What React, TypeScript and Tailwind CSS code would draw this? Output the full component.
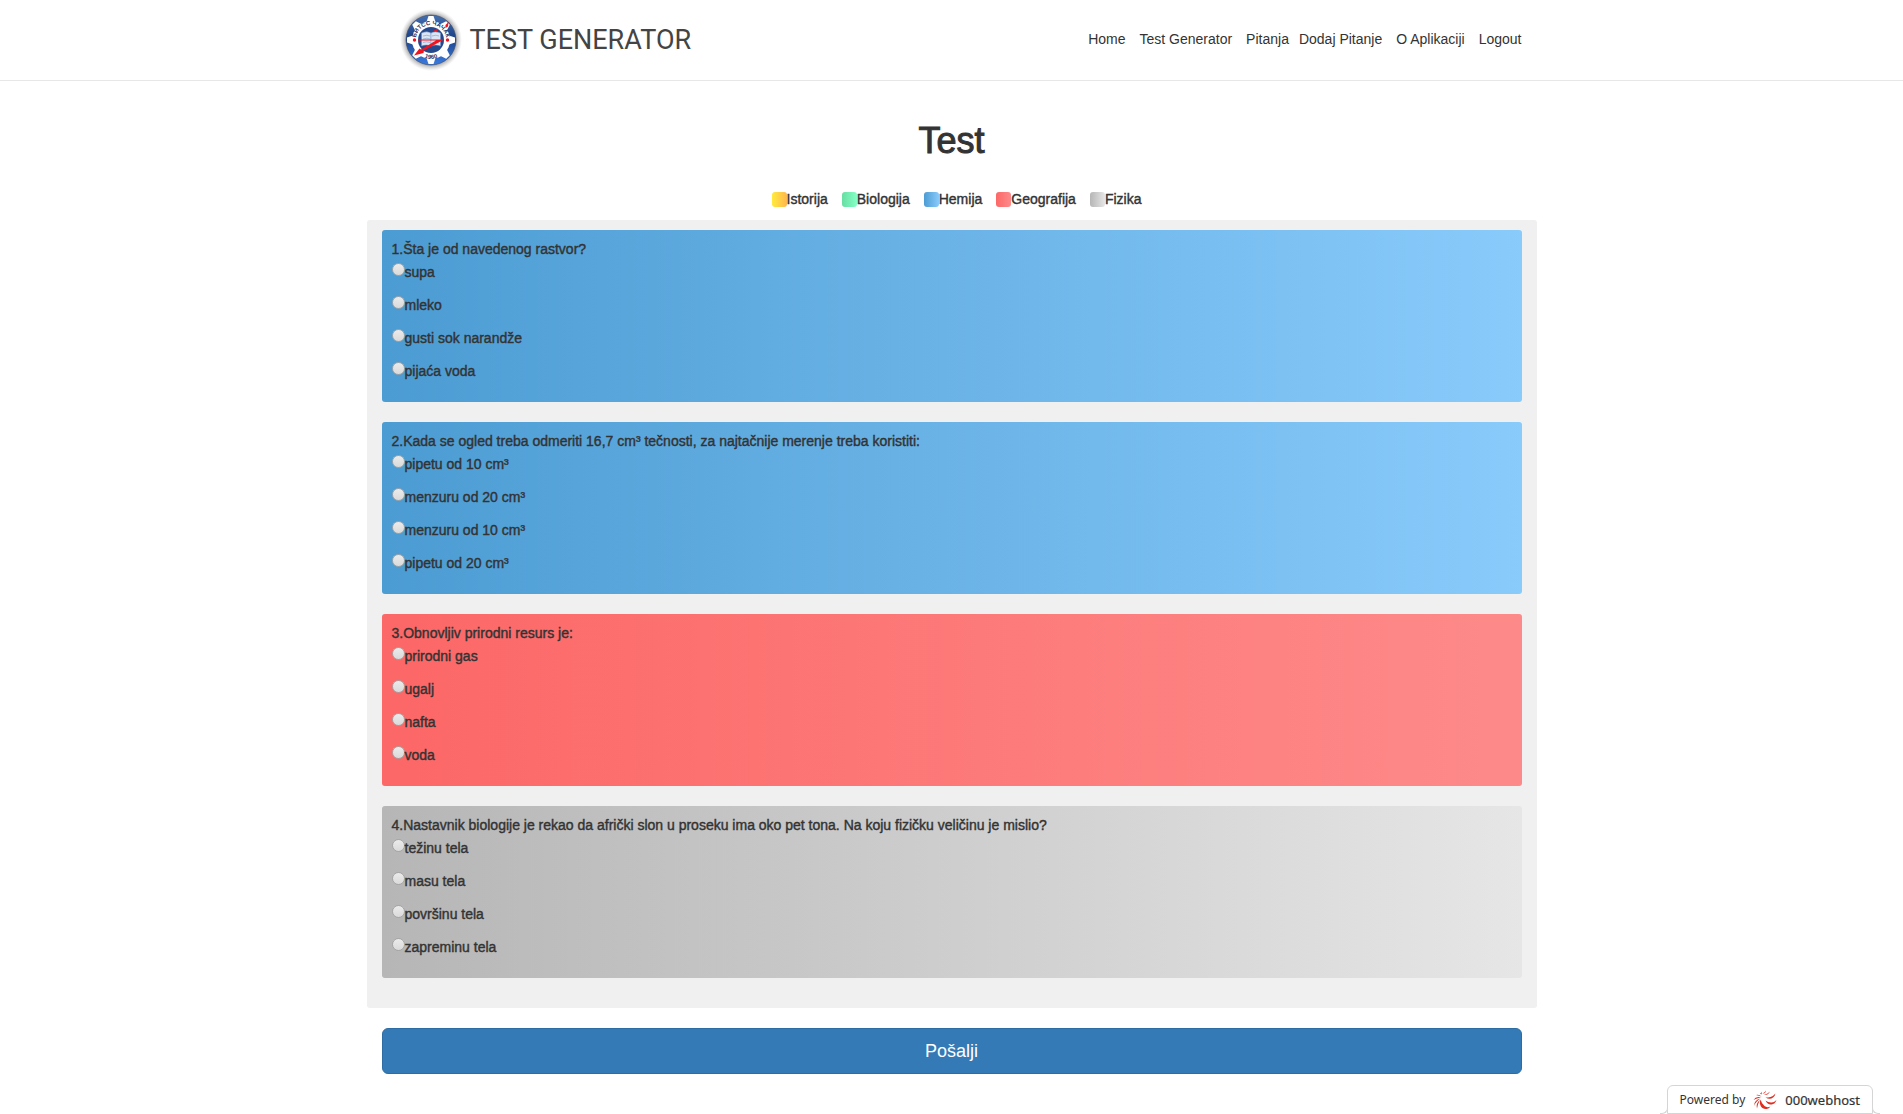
const FONT = "font-['Liberation_Sans',Arial,sans-serif]";
const FAUX = '[-webkit-text-stroke:0.4px_#333]';

const SUBJECTS = {
  istorija: 'bg-linear-to-r from-[#ffeb3b] to-[#ffb74d]',
  biologija: 'bg-linear-to-r from-[#66dea4] to-[#85ffc4]',
  hemija: 'bg-linear-to-r from-[#4b9cd3] to-[#89cbfb]',
  geografija: 'bg-linear-to-r from-[#fc6767] to-[#fd8a8a]',
  fizika: 'bg-linear-to-r from-[#b6b6b6] to-[#e6e6e6]',
};

const LEGEND: { label: string; subject: keyof typeof SUBJECTS }[] = [
  { label: 'Istorija', subject: 'istorija' },
  { label: 'Biologija', subject: 'biologija' },
  { label: 'Hemija', subject: 'hemija' },
  { label: 'Geografija', subject: 'geografija' },
  { label: 'Fizika', subject: 'fizika' },
];

const QUESTIONS: { text: string; subject: keyof typeof SUBJECTS; options: string[] }[] = [
  { text: 'Šta je od navedenog rastvor?', subject: 'hemija', options: ['supa', 'mleko', 'gusti sok narandže', 'pijaća voda'] },
  {
    text: 'Kada se ogled treba odmeriti 16,7 cm³ tečnosti, za najtačnije merenje treba koristiti:',
    subject: 'hemija',
    options: ['pipetu od 10 cm³', 'menzuru od 20 cm³', 'menzuru od 10 cm³', 'pipetu od 20 cm³'],
  },
  { text: 'Obnovljiv prirodni resurs je:', subject: 'geografija', options: ['prirodni gas', 'ugalj', 'nafta', 'voda'] },
  {
    text: 'Nastavnik biologije je rekao da afrički slon u proseku ima oko pet tona. Na koju fizičku veličinu je mislio?',
    subject: 'fizika',
    options: ['težinu tela', 'masu tela', 'površinu tela', 'zapreminu tela'],
  },
];

const NAV_GROUPS = [
  ['Home', 'Test Generator', 'Pitanja'],
  ['Dodaj Pitanje', 'O Aplikaciji', 'Logout'],
];
const TEETH = [0, 45, 90, 135, 180, 225, 270, 315];

function SchoolLogo() {
  return (
    <svg viewBox="-1 0 64 64" className="size-16 shrink-0" aria-hidden="true">
      <defs>
        <radialGradient id="halo">
          <stop offset="0.78" stopColor="#9c9c9c" />
          <stop offset="1" stopColor="#c8c8c8" stopOpacity="0" />
        </radialGradient>
        <linearGradient id="disc" x1="0" y1="0" x2="0" y2="1">
          <stop offset="0" stopColor="#4470b0" />
          <stop offset="0.45" stopColor="#1c4288" />
          <stop offset="1" stopColor="#3a7ce0" />
        </linearGradient>
        <path id="arcTop" d="M17.500 37A15.300 15.300 0 1 1 46.500 37" />
        <path id="arcBottom" d="M20 46.500A18.500 18.500 0 0 0 44 46.500" />
      </defs>
      <circle cx="32" cy="32" r="31" fill="url(#halo)" />
      <circle cx="32" cy="32" r="25" fill="url(#disc)" stroke="#3a4a68" strokeWidth="0.6" />
      <g fill="#fff">
        {TEETH.map((a) => (
          <path key={a} d="M27.500 14L29.500 8H34.500L36.500 14Z" transform={`rotate(${a} 32 32)`} />
        ))}
        <circle cx="32" cy="32" r="19" />
      </g>
      <circle cx="32" cy="32" r="13" fill="#24498c" />
      <g fill="#dbe5f3" stroke="#6c8cc0" strokeWidth="0.5">
        <path d="M22.500 25Q28 22.500 32 25V38Q27 36 22.500 38Z" />
        <path d="M41.500 25Q36 22.500 32 25V38Q37 36 41.500 38Z" />
        <path d="M24 28Q28 26.500 31 28M24 31Q28 29.500 31 31M24 34.500Q28 33 31 34.500M33 28Q37 26.500 40 28M33 35Q37 33.500 40 35" fill="none" />
      </g>
      <g fill="#1c3566" fontFamily="Liberation Sans" fontWeight="700" fontSize="6">
        <text textAnchor="middle">
          <textPath href="#arcTop" startOffset="50%">БИТСС ЧАЧАК</textPath>
        </text>
        <text textAnchor="middle">
          <textPath href="#arcBottom" startOffset="50%">1960</textPath>
        </text>
      </g>
      <g fill="#f0141e">
        <path d="M46.500 17L49.500 14L49 18.500L46.500 20Z" />
        <path d="M19 31.500H45L25 42.500L24.500 45L15 47.500L20.500 40.500L22 41.500L37 32.500H19Z" />
        <path d="M33 23.500L39 20.500L38.500 23Z" />
        <circle cx="15.500" cy="32" r="1.700" />
        <circle cx="48.500" cy="32" r="1.700" />
      </g>
    </svg>
  );
}

function HostMark() {
  return (
    <svg viewBox="0 0 24 20" className="h-5 w-6" fill="#df2d1f" aria-hidden="true">
      <path d="M7.500 9.500C5.500 15 9 19.500 13.500 19Q16 18.500 17.500 16.500Q14 18 11.500 16Q8.500 13.500 7.500 9.500Z" />
      <path d="M12.500 10.500Q14.500 15 18.500 14.500Q22 14 23.500 10Q20.500 13 18 12.500Q15 12.500 12.500 10.500Z" />
      <path d="M12.500 7.500Q17 10 20 7.500Q22 6 22.500 3.500Q20 6.500 17.500 7Q15 7.500 12.500 7.500Z" />
      <path d="M11 5Q15 5.500 17 1.500Q15 3.500 11 5ZM9.500 3.500Q12.500 4 13 0.500Q12 2.500 9.500 3.500ZM7 3.500L8.500 4.500L9 1.500Q8.500 3 7 3.500Z" />
      <path d="M3 5Q6 4 8.500 6.500Q6 5.500 3 5ZM0.500 10Q3 6 8 7.500Q3.500 8 0.500 10Z" />
      <path d="M1 16Q1 10 7.500 8.500Q3 11 1 16ZM4 18.500Q2.500 13.500 7 10Q4.500 14 4 18.500Z" />
    </svg>
  );
}

export default function App() {
  return (
    <div className={`${FONT} relative min-h-screen bg-white text-sm leading-5 text-[#333]`}>
      <header className="border-b border-[#e7e7e7]">
        <div className="mx-auto flex h-20 max-w-[1140px] items-center justify-between">
          <a href="#" className="ml-4 flex items-center gap-2 font-['Roboto',sans-serif] text-[27px] text-[#444]">
            <SchoolLogo />
            <span>TEST GENERATOR</span>
          </a>
          <nav className="flex gap-[10px] pb-[2px]">
            {NAV_GROUPS.map((group) => (
              <ul key={group[0]} className="flex gap-[14px]">
                {group.map((item) => (
                  <li key={item}>
                    <a href="#">{item}</a>
                  </li>
                ))}
              </ul>
            ))}
          </nav>
        </div>
      </header>

      <main className="mx-auto max-w-[1170px]">
        <h1 className="pt-10 text-center text-4xl leading-10 [-webkit-text-stroke:1px_#333]">Test</h1>
        <ul className="mt-7 mb-[11px] flex justify-center gap-[14px] pl-[10px]">
          {LEGEND.map(({ label, subject }) => (
            <li key={label} className={`flex items-center ${FAUX}`}>
              <span className={`size-[15px] rounded-[3px] ${SUBJECTS[subject]}`} />
              {label}
            </li>
          ))}
        </ul>

        <form>
          <div className="flex flex-col gap-5 rounded-[3px] bg-[#f0f0f0] px-[15px] pt-[10px] pb-[30px]">
            {QUESTIONS.map((q, qi) => (
              <fieldset key={q.text} className={`rounded-[3px] px-[10px] pt-[9px] pb-[11px] ${FAUX} ${SUBJECTS[q.subject]}`}>
                <legend className="float-left w-full">
                  {qi + 1}.{q.text}
                </legend>
                <div className="clear-both">
                  {q.options.map((option) => (
                    <div key={option} className="flex h-[33px] items-start pt-[3px]">
                      <label className="flex">
                        <input
                          type="radio"
                          name={`question-${qi + 1}`}
                          className="mt-px size-[13px] appearance-none rounded-full border border-[#a5a5a5] bg-linear-to-b from-[#ebebeb] to-[#dadada]"
                        />
                        {option}
                      </label>
                    </div>
                  ))}
                </div>
              </fieldset>
            ))}
          </div>
          <div className="px-[15px] pt-5">
            <button
              type="button"
              className="h-[46px] w-full rounded-md border border-[#2e6da4] bg-[#337ab7] text-lg text-white"
            >
              Pošalji
            </button>
          </div>
        </form>
      </main>

      <a
        href="#"
        className="absolute right-[30px] bottom-0 flex h-[29px] items-center rounded-t-md border border-[#d5d5d5] bg-white px-3 font-['Noto_Sans',sans-serif] text-[#333]"
      >
        <span className="absolute -bottom-px -left-2 size-2 rounded-br-md border-r border-b border-[#d5d5d5] bg-white" />
        <span className="absolute -right-2 -bottom-px size-2 rounded-bl-md border-b border-l border-[#d5d5d5] bg-white" />
        <span className="text-xs">Powered by</span>
        <span className="mx-2">
          <HostMark />
        </span>
        <span className="text-[13px] [-webkit-text-stroke:0.2px_#333]">000webhost</span>
      </a>
    </div>
  );
}
